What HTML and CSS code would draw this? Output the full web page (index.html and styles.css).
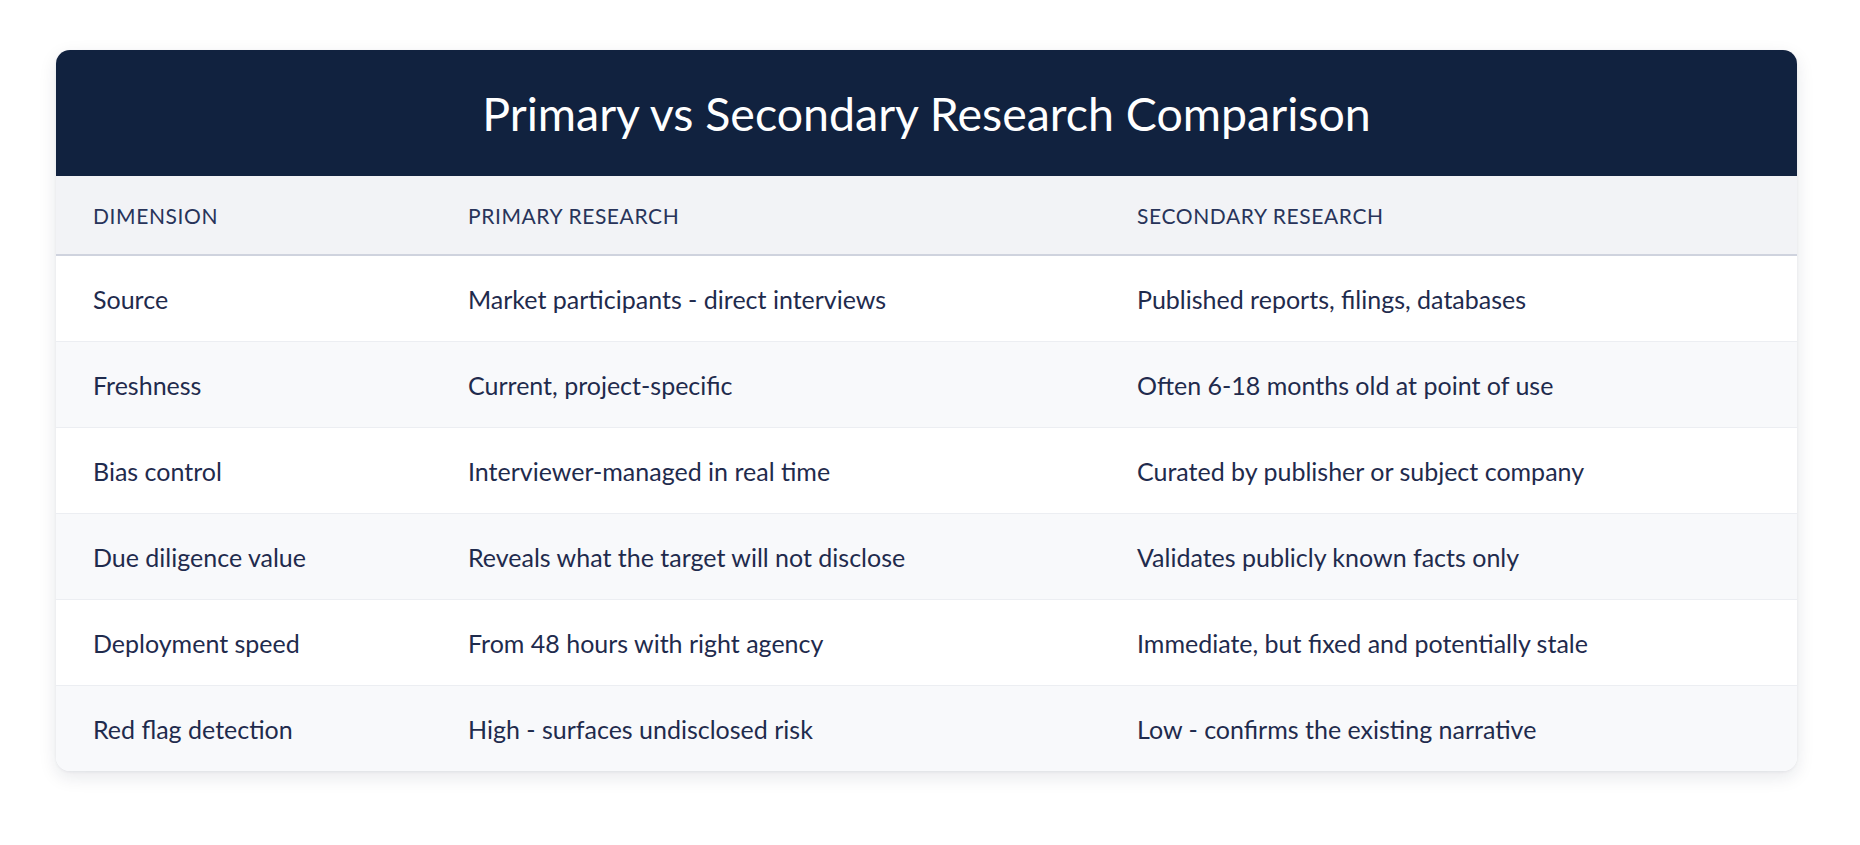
FILE: index.html
```html
<!DOCTYPE html>
<html lang="en">
<head>
<meta charset="utf-8">
<title>Primary vs Secondary Research Comparison</title>
<link rel="stylesheet" href="styles.css">
</head>
<body>
<div class="page">
  <div class="card">
    <div class="card-title">Primary vs Secondary Research Comparison</div>
    <table class="cmp">
      <colgroup>
        <col class="c1"><col class="c2"><col class="c3">
      </colgroup>
      <thead>
        <tr><th>Dimension</th><th>Primary Research</th><th>Secondary Research</th></tr>
      </thead>
      <tbody>
        <tr><td>Source</td><td>Market participants - direct interviews</td><td>Published reports, filings, databases</td></tr>
        <tr><td>Freshness</td><td>Current, project-specific</td><td>Often 6-18 months old at point of use</td></tr>
        <tr><td>Bias control</td><td>Interviewer-managed in real time</td><td>Curated by publisher or subject company</td></tr>
        <tr><td>Due diligence value</td><td>Reveals what the target will not disclose</td><td>Validates publicly known facts only</td></tr>
        <tr><td>Deployment speed</td><td>From 48 hours with right agency</td><td>Immediate, but fixed and potentially stale</td></tr>
        <tr><td>Red flag detection</td><td>High - surfaces undisclosed risk</td><td>Low - confirms the existing narrative</td></tr>
      </tbody>
    </table>
  </div>
</div>
</body>
</html>
```

FILE: styles.css
```css
html, body {
  margin: 0;
  padding: 0;
  background: #ffffff;
}
body {
  font-family: "Lato", "Liberation Sans", sans-serif;
  color: #1f2b4d;
}
.page {
  padding: 50px 63px 76px 56px;
}
.card {
  width: 1741px;
  border-radius: 14px;
  overflow: hidden;
  background: #ffffff;
  box-shadow: 0 6px 18px rgba(20, 30, 60, 0.10), 0 1px 3px rgba(20, 30, 60, 0.06);
}
.card-title {
  background: #11223f;
  color: #ffffff;
  height: 126px;
  display: flex;
  align-items: center;
  justify-content: center;
  font-size: 46.5px;
  font-weight: 400;
  letter-spacing: 0;
}
.cmp {
  width: 100%;
  border-collapse: collapse;
  table-layout: fixed;
}
.cmp col.c1 { width: 375px; }
.cmp col.c2 { width: 669px; }
.cmp col.c3 { width: 697px; }
.cmp th {
  background: #f2f3f6;
  height: 78px;
  padding: 0 37px;
  text-align: left;
  font-weight: 400;
  font-size: 21px;
  text-transform: uppercase;
  letter-spacing: 0.6px;
  color: #28345a;
  border-bottom: 2px solid #cfd3de;
}
.cmp td {
  height: 85px;
  padding: 0 37px;
  font-size: 25px;
  color: #1f2b4d;
  border-bottom: 1px solid #eceef2;
}
.cmp tbody tr:nth-child(even) td {
  background: #f8f9fb;
}
.cmp tbody tr:last-child td {
  border-bottom: none;
}
```
